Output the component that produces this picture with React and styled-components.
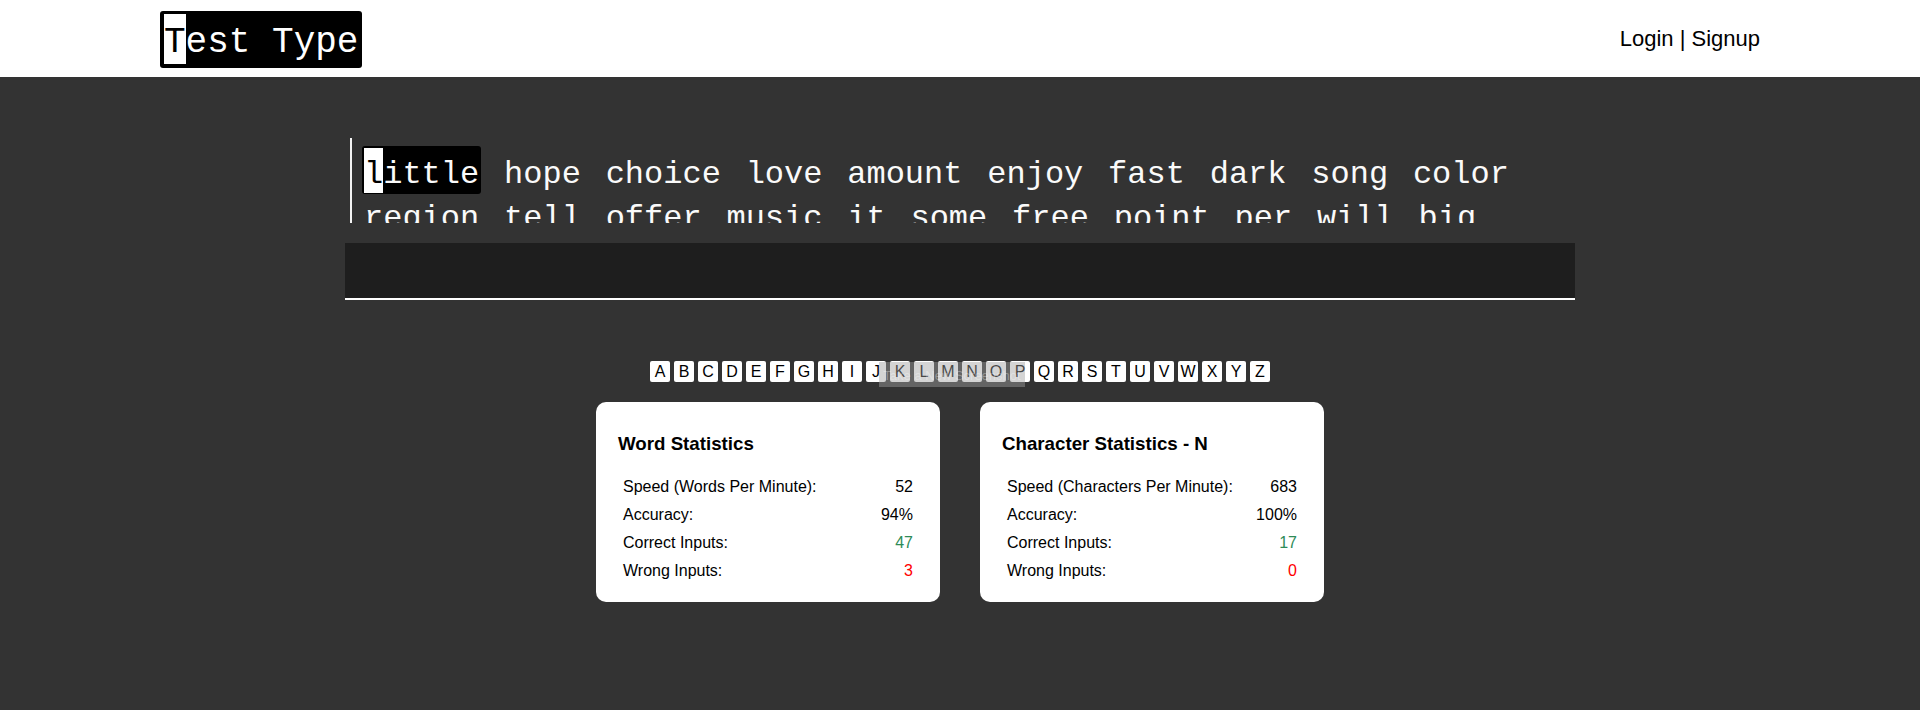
import React from 'react';
import styled, { createGlobalStyle } from 'styled-components';

const GlobalStyle = createGlobalStyle`
  html, body { margin: 0; padding: 0; }
  body {
    background: #333333;
    font-family: "Liberation Sans", Arial, sans-serif;
    min-height: 710px;
  }
`;

const Header = styled.header`
  height: 77px;
  box-sizing: border-box;
  background: #ffffff;
  display: flex;
  align-items: center;
  justify-content: space-between;
  padding: 0 160px;
`;

const Logo = styled.div`
  margin-top: 2px;
  background: #000;
  color: #fff;
  font-family: "Liberation Mono", "DejaVu Sans Mono", monospace;
  font-size: 36px;
  padding: 3px 4px 4px;
  border-radius: 3px;
  white-space: pre;
`;

const LogoText = styled.span`
  display: block;
  padding-top: 7px;
  line-height: 43px;
`;

const LogoCursor = styled.span`
  display: inline-block;
  vertical-align: top;
  margin-top: -7px;
  padding-top: 7px;
  line-height: 43px;
  background: #fff;
  color: #000;
`;

const AuthLinks = styled.nav`
  font-size: 22px;
  color: #000;
`;

const Main = styled.main`
  display: flex;
  flex-direction: column;
  align-items: center;
  padding-top: 61px;
`;

const TypingArea = styled.section`
  width: 1230px;
  display: flex;
  flex-direction: column;
`;

const Words = styled.div`
  margin-left: 5px;
  height: 84.5px;
  box-sizing: border-box;
  border-left: 2px solid #f4f4f4;
  padding: 8px 0 0 10px;
  overflow: hidden;
  display: flex;
  flex-wrap: wrap;
  align-content: flex-start;
  column-gap: 20.8px;
  font-family: "Liberation Mono", "DejaVu Sans Mono", monospace;
  font-size: 32px;
  color: #fafafa;
`;

const Word = styled.span`
  padding: 1.5px 2px;
  margin-bottom: -3.2px;
  border-radius: 3px;
  background: ${p => (p.$active ? '#000' : 'transparent')};
  white-space: pre;
`;

const Glyphs = styled.span`
  display: block;
  padding-top: 8px;
  line-height: 37px;
`;

const Caret = styled.span`
  display: inline-block;
  vertical-align: top;
  margin-top: -8px;
  padding-top: 8px;
  line-height: 37px;
  background: #fff;
  color: #000;
`;

const InputBar = styled.div`
  margin-top: 20.5px;
  height: 55px;
  background: #1e1e1e;
  border-bottom: 2px solid #fff;
`;

const KeyRow = styled.div`
  position: relative;
  margin-top: 61px;
  display: flex;
  gap: 4px;
`;

const Key = styled.span`
  width: 20px;
  height: 21px;
  border-radius: 2px;
  background: #fff;
  color: #000;
  font-size: 16px;
  display: flex;
  align-items: center;
  justify-content: center;
`;

const ShotOverlay = styled.div`
  position: absolute;
  left: 229px;
  top: 1px;
  width: 146px;
  height: 25px;
  background: rgba(160, 160, 160, 0.45);
  color: rgba(255, 255, 255, 0.32);
  font-size: 13px;
  display: flex;
  align-items: flex-end;
  justify-content: center;
  padding-bottom: 4px;
  box-sizing: border-box;
  white-space: nowrap;
`;

const CardRow = styled.div`
  margin-top: 20px;
  display: flex;
  gap: 40px;
`;

const Card = styled.div`
  width: 344px;
  height: 200px;
  box-sizing: border-box;
  padding: 12px 22px 17px;
  background: #fff;
  border-radius: 10px;
`;

const CardTitle = styled.h3`
  margin: 18.72px 0;
  font-size: 18.72px;
  font-weight: bold;
  color: #000;
`;

const StatRow = styled.div`
  height: 28px;
  padding: 0 5px;
  display: grid;
  grid-template-columns: 1fr auto;
  align-items: center;
  font-size: 16px;
  color: #000;
`;

const StatValue = styled.span`
  text-align: right;
  color: ${p => (p.$tone === 'good' ? '#2e8b57' : p.$tone === 'bad' ? '#ff0000' : '#000')};
`;

const words = [
  'little', 'hope', 'choice', 'love', 'amount', 'enjoy', 'fast', 'dark', 'song', 'color',
  'region', 'tell', 'offer', 'music', 'it', 'some', 'free', 'point', 'per', 'will', 'big',
  'number', 'question', 'between', 'machine', 'several', 'perhaps',
];

const letters = 'ABCDEFGHIJKLMNOPQRSTUVWXYZ'.split('');

const cards = [
  {
    title: 'Word Statistics',
    rows: [
      ['Speed (Words Per Minute):', '52'],
      ['Accuracy:', '94%'],
      ['Correct Inputs:', '47', 'good'],
      ['Wrong Inputs:', '3', 'bad'],
    ],
  },
  {
    title: 'Character Statistics - N',
    rows: [
      ['Speed (Characters Per Minute):', '683'],
      ['Accuracy:', '100%'],
      ['Correct Inputs:', '17', 'good'],
      ['Wrong Inputs:', '0', 'bad'],
    ],
  },
];

export default function App() {
  return (
    <>
      <GlobalStyle />
      <Header>
        <Logo>
          <LogoText>
            <LogoCursor>T</LogoCursor>est Type
          </LogoText>
        </Logo>
        <AuthLinks>Login | Signup</AuthLinks>
      </Header>
      <Main>
        <TypingArea>
          <Words>
            {words.map((w, i) => (
              <Word key={i} $active={i === 0}>
                <Glyphs>
                  {i === 0 ? (
                    <>
                      <Caret>{w[0]}</Caret>
                      {w.slice(1)}
                    </>
                  ) : (
                    w
                  )}
                </Glyphs>
              </Word>
            ))}
          </Words>
          <InputBar />
        </TypingArea>
        <KeyRow>
          {letters.map(l => (
            <Key key={l}>{l}</Key>
          ))}
          <ShotOverlay>Take a New Screenshot</ShotOverlay>
        </KeyRow>
        <CardRow>
          {cards.map(c => (
            <Card key={c.title}>
              <CardTitle>{c.title}</CardTitle>
              {c.rows.map(([label, value, tone]) => (
                <StatRow key={label}>
                  <span>{label}</span>
                  <StatValue $tone={tone}>{value}</StatValue>
                </StatRow>
              ))}
            </Card>
          ))}
        </CardRow>
      </Main>
    </>
  );
}
